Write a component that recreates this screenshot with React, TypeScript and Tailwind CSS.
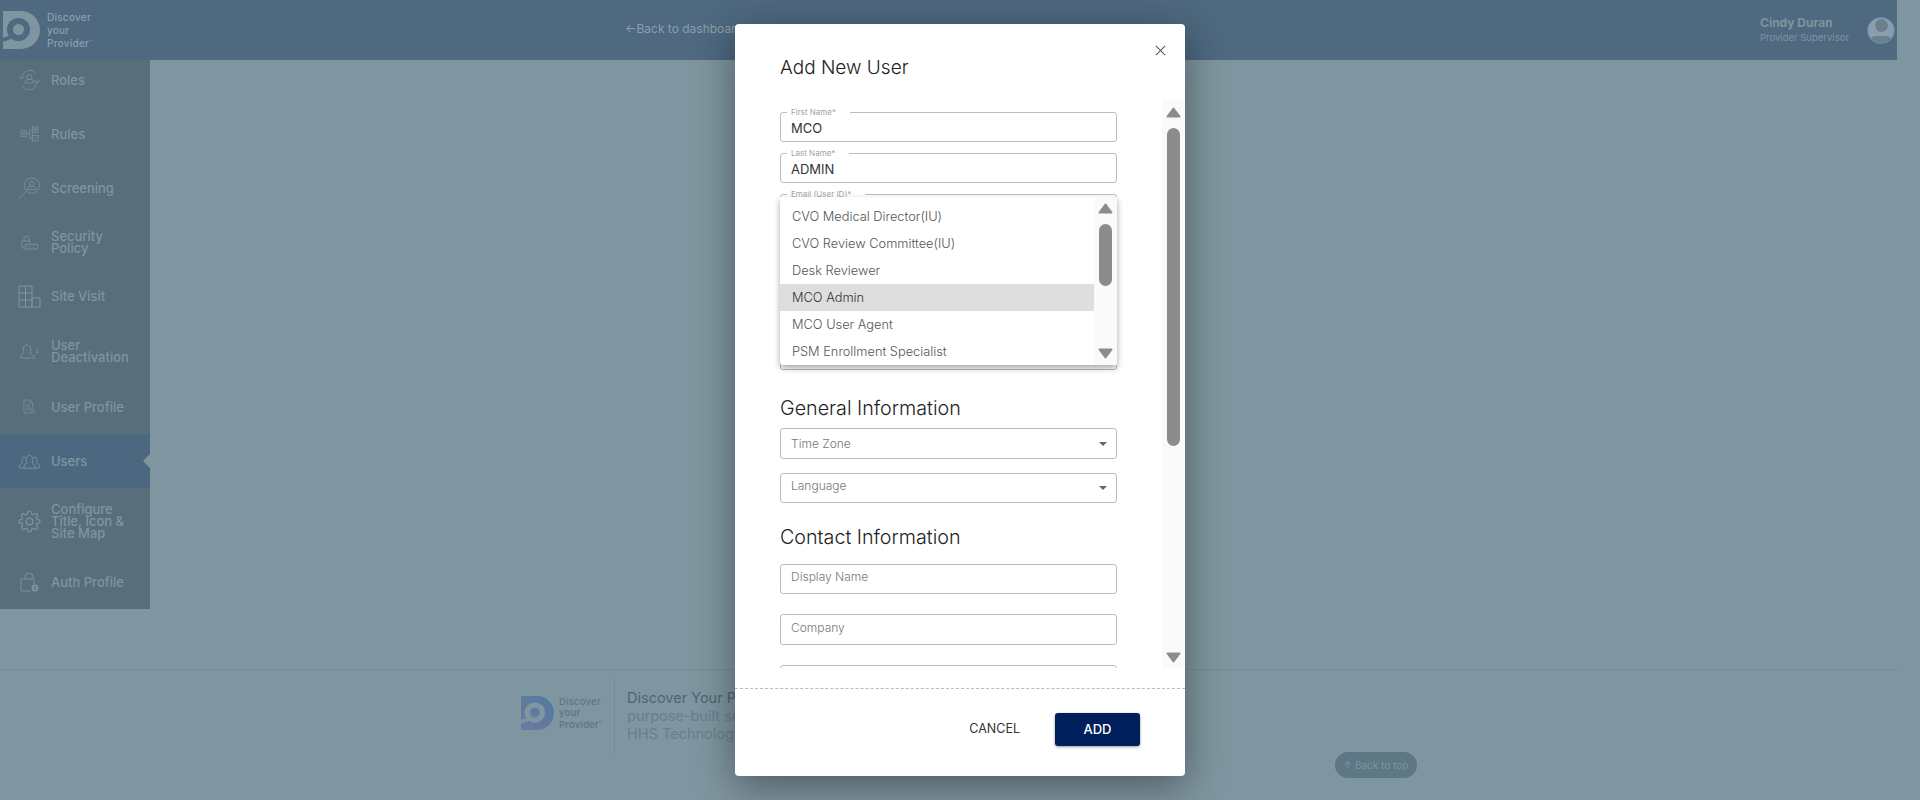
import React from 'react';

const sans = "font-['Inter','Liberation_Sans',sans-serif]";

const LogoMark = ({ light, dark, className }: { light: string; dark: string; className: string }) => (
  <svg viewBox="0 0 37 38" className={className}>
    <defs>
      <linearGradient id="logoGradient" x1="1" y1="0" x2="0" y2="1">
        <stop offset="0" stopColor="#4f7ba0" />
        <stop offset="1" stopColor="#6f7a9e" />
      </linearGradient>
    </defs>
    <path d="M0 0h18a19 19 0 0 1 0 38H0z" fill={light} />
    <circle cx="15.5" cy="18.5" r="11.5" fill={dark} />
    <circle cx="15.5" cy="18.5" r="5.5" fill={light} />
    <path d="M8 26L0 29" stroke={dark} strokeWidth="4" />
  </svg>
);

const icons: Record<string, React.ReactNode> = {
  roles: (
    <svg viewBox="0 0 24 20" className="h-[20px] w-[23px] shrink-0" fill="none" stroke="currentColor" strokeWidth="0.8">
      <path d="M4 8a8.500 8.500 0 0 1 15-5M20 11a8.500 8.500 0 0 1-15 6" />
      <path d="M1 7l3 2 3-3M17 10l3 3 3-3" />
      <circle cx="12" cy="7" r="2.600" />
      <path d="M7.500 13c0-3 2-3.500 3-3.500h3c1 0 3 .5 3 3.500z" />
    </svg>
  ),
  rules: (
    <svg viewBox="0 0 20 17" className="h-[16px] w-[19px] shrink-0" fill="none" stroke="currentColor" strokeWidth="0.8">
      <rect x="1" y="5" width="6" height="6" />
      <rect x="3" y="7" width="2" height="2" />
      <rect x="13" y="1" width="6" height="6" />
      <rect x="15" y="3" width="2" height="2" />
      <rect x="13" y="10" width="6" height="6" />
      <path d="M15 13l1 1 2-2M7 8h3M10 4h3v9h-3z" />
    </svg>
  ),
  screening: (
    <svg viewBox="0 0 24 24" className="h-[23px] w-[23px] shrink-0" fill="none" stroke="currentColor" strokeWidth="0.8">
      <circle cx="14.500" cy="9" r="8" />
      <circle cx="14.500" cy="7" r="2.500" />
      <path d="M10 13c0-3 2-3.300 3-3.300h3c1 0 3 .3 3 3.300zM8.500 15L1 23" />
    </svg>
  ),
  security: (
    <svg viewBox="0 0 17 15" className="h-[15px] w-[17px] shrink-0" fill="none" stroke="currentColor" strokeWidth="0.8">
      <path d="M3 6V3.500a2.500 2.500 0 0 1 5 0V6M4 13H1V6h8v3" />
      <rect x="4.500" y="9.500" width="12" height="4.500" />
      <path d="M6.500 11.800h8" strokeDasharray="1 1" />
    </svg>
  ),
  site: (
    <svg viewBox="0 0 23 23" className="h-[23px] w-[23px] shrink-0" fill="none" stroke="currentColor" strokeWidth="1">
      <path d="M1 1h13v21H1zM14 13h8v9h-8zM1 8h13M1 15h13M7.500 1v21" />
    </svg>
  ),
  deactivation: (
    <svg viewBox="0 0 19 15" className="h-[15px] w-[19px] shrink-0" fill="none" stroke="currentColor" strokeWidth="0.9">
      <path d="M3.500 14H.7c0-3.500 2-5 3.300-5.500C2.500 6.500 3 1 7 1s4.500 5.500 3 7.500c1 .5 1.500 1.200 2 2.300M3.500 14H11" />
      <path d="M12 12h3l-3 3h3M16 6h2.500l-2.500 2.500h2.500" strokeWidth="0.6" />
    </svg>
  ),
  profile: (
    <svg viewBox="0 0 13 16" className="h-[16px] w-[13px] shrink-0" fill="none" stroke="currentColor" strokeWidth="0.7">
      <path d="M8 14H1V1h6l2.500 2.500V8M7 1v3h2.500M3 6h4M3 8h4M3 10h3" />
      <circle cx="9" cy="11" r="2" />
      <path d="M10.500 12.500L12.500 15" />
    </svg>
  ),
  users: (
    <svg viewBox="0 0 23 15" className="h-[15px] w-[23px] shrink-0" fill="none" stroke="currentColor" strokeWidth="0.9">
      <path d="M6 14H2l-1-.5c0-2 1.500-3.500 3.500-4.500C3.500 7.500 3.500 3 6 3c.8 0 1.500.4 2 1M17 14h4l1-.5c0-2-1.500-3.500-3.500-4.500 1-1.500 1-6-1.500-6-.8 0-1.500.4-2 1" />
      <path d="M6 14.300h11c.5-2-1-4.500-3-5.500 1.500-2 1-7.300-2.500-7.300S7.500 6.800 9 8.800c-2 1-3.500 3.500-3 5.500z" />
    </svg>
  ),
  gear: (
    <svg viewBox="0 0 24 24" className="h-[23px] w-[23px] shrink-0" fill="none" stroke="currentColor" strokeWidth="1.200">
      <circle cx="12" cy="12" r="3.500" />
      <path d="M19.400 15a1.650 1.650 0 0 0 .33 1.820l.06.06a2 2 0 1 1-2.830 2.830l-.06-.06a1.650 1.650 0 0 0-2.820 1.170V21a2 2 0 1 1-4 0v-.09A1.650 1.650 0 0 0 7.270 19.700l-.06.06a2 2 0 1 1-2.830-2.830l.06-.06A1.650 1.650 0 0 0 3.270 14H3a2 2 0 1 1 0-4h.09A1.650 1.650 0 0 0 4.300 7.270l-.06-.06a2 2 0 1 1 2.830-2.830l.06.06A1.650 1.650 0 0 0 10 3.270V3a2 2 0 1 1 4 0v.09a1.650 1.650 0 0 0 2.820 1.170l.06-.06a2 2 0 1 1 2.830 2.830l-.06.06A1.650 1.650 0 0 0 20.900 10H21a2 2 0 1 1 0 4h-.09a1.650 1.650 0 0 0-1.510 1z" />
    </svg>
  ),
  auth: (
    <svg viewBox="0 0 19 20" className="h-[20px] w-[19px] shrink-0" fill="none" stroke="currentColor" strokeWidth="0.9">
      <path d="M5 7V5a3.800 3.800 0 0 1 8 0v2M11 19H1V7h13v6" />
      <circle cx="15" cy="16" r="3.500" fill="currentColor" stroke="none" />
      <circle cx="15" cy="15" r="1" fill="#586e7b" stroke="none" />
      <path d="M13.200 18c0-1.500 3.600-1.500 3.600 0" stroke="#586e7b" />
    </svg>
  ),
};

const navItems = [
  { label: 'Roles', icon: 'roles', height: 'h-[54px]' },
  { label: 'Rules', icon: 'rules', height: 'h-[54px]' },
  { label: 'Screening', icon: 'screening', height: 'h-[54px]' },
  { label: 'Security\nPolicy', icon: 'security', height: 'h-[54px]' },
  { label: 'Site Visit', icon: 'site', height: 'h-[54px]' },
  { label: 'User\nDeactivation', icon: 'deactivation', height: 'h-[57px]' },
  { label: 'User Profile', icon: 'profile', height: 'h-[54px]' },
  { label: 'Users', icon: 'users', height: 'h-[54px]', active: true },
  { label: 'Configure\nTitle, Icon &\nSite Map', icon: 'gear', height: 'h-[67px]' },
  { label: 'Auth Profile', icon: 'auth', height: 'h-[54px]' },
];

const roles = ['CVO Medical Director(IU)', 'CVO Review Committee(IU)', 'Desk Reviewer', 'MCO Admin', 'MCO User Agent', 'PSM Enrollment Specialist'];

const Triangle = ({ down, className }: { down?: boolean; className: string }) => (
  <svg viewBox="0 0 15 11" className={className}>
    <path
      d={down ? 'M1.500 1.500L13.500 1.500L7.500 9.500z' : 'M1.500 9.500L13.500 9.500L7.500 1.500z'}
      fill="#8c8c8c"
      stroke="#8c8c8c"
      strokeWidth="2"
      strokeLinejoin="round"
    />
  </svg>
);

const Field = ({ label, value, className }: { label: string; value: string; className?: string }) => (
  <div className={`relative h-[30px] rounded-[3px] border border-[#bdbdbd] px-[10px] ${className ?? ''}`}>
    <span className="absolute -top-[5px] left-[6px] bg-white pl-[4px] pr-[14px] text-[8px] leading-[9px] text-[#a3a3a3]">{label}</span>
    <div className="pt-[7px] text-[13px] leading-[16px] text-[#333]">{value}</div>
  </div>
);

const Placeholder = ({ label, caret, className }: { label: string; caret?: boolean; className: string }) => (
  <div className={`flex items-center justify-between rounded-[3px] border border-[#bdbdbd] pl-[10px] pr-[9px] text-[12px] font-light text-[#777] ${className}`}>
    <span>{label}</span>
    {caret && <span className="h-0 w-0 border-x-[4px] border-t-[4px] border-x-transparent border-t-[#666]" />}
  </div>
);

export default function App() {
  return (
    <div className={`relative h-[800px] w-[1920px] overflow-hidden bg-[#7f959f] ${sans}`}>
      <div className="w-[1897px]">
        <header className="relative z-10 flex h-[60px] items-center bg-[#4e6980]">
          <div className="flex w-[625px] items-center pl-[3px]">
            <LogoMark light="#7f959f" dark="#4e6980" className="h-[38px] w-[37px]" />
            <div className="ml-[7px] text-[10px] font-medium leading-[13px] tracking-wide text-[#8aa0ad]">
              Discover<br />your<br />Provider<sup className="text-[5px]">™</sup>
            </div>
          </div>
          <span className="pb-[2px] text-[12px] text-[#8aa0ad]">←Back to dashboard</span>
          <div className="ml-auto flex items-center">
            <div className="w-[107px] text-[#7f959f]">
              <div className="text-[12px] font-bold leading-[16px]">Cindy Duran</div>
              <div className="text-[9.5px] leading-[14px]">Provider Supervisor</div>
            </div>
            <div className="mr-[2px] h-[27px] w-[28px] overflow-hidden rounded-full border border-[#5e88a8] bg-[#8a9fab]">
              <div className="mx-auto mt-[1px] h-[13px] w-[13px] rounded-full bg-[#6b808d]" />
              <div className="mx-auto mt-[4px] h-[14px] w-[24px] rounded-full bg-[#6b808d]" />
            </div>
          </div>
        </header>

        <aside className="h-[549px] w-[150px] overflow-hidden bg-[#586e7b]">
          <ul className="-mt-[7px]">
            {navItems.map((item) => (
              <li key={item.icon} className={`relative flex items-center text-[#7f959f] ${item.height} ${item.active ? 'bg-[#4c6880]' : ''}`}>
                <span className="flex w-[51px] shrink-0 justify-center pl-[12px] pr-[5px]">{icons[item.icon]}</span>
                <span className="whitespace-pre-line pb-px text-[13px] font-medium leading-[12px]">{item.label}</span>
                {item.active && (
                  <span className="absolute right-0 top-1/2 h-0 w-0 -translate-y-1/2 border-y-[7px] border-r-[7px] border-y-transparent border-r-[#7f959f]" />
                )}
              </li>
            ))}
          </ul>
        </aside>

        <footer className="mt-[60px] flex h-[131px] border-t border-[#748b96] pl-[521px] pt-[8px]">
          <div className="flex h-[75px] w-[94px] items-center border-r border-[#748b96] pb-[5px]">
            <LogoMark light="url(#logoGradient)" dark="#7f959f" className="h-[34px] w-[33px]" />
            <div className="ml-[5px] text-[9.5px] font-medium leading-[11.5px] tracking-wide text-[#5d7685]">
              Discover<br />your<br />Provider<sup className="text-[5px]">™</sup>
            </div>
          </div>
          <div className="pl-[12px] pt-[11px] text-[14.5px] leading-[18px] text-[#658090]">
            <div className="text-[#4f6575]">Discover Your Provider</div>
            <div>purpose-built solution</div>
            <div>HHS Technology Group</div>
          </div>
        </footer>
      </div>

      <a className="absolute left-[1335px] top-[752px] flex h-[26px] w-[82px] items-center justify-center gap-[3px] rounded-full bg-[#5d7785] text-[10px] text-[#7f959f]">
        <span>↑</span>Back to top
      </a>

      <div className="absolute left-[735px] top-[24px] z-20 flex h-[752px] w-[450px] flex-col rounded-[4px] bg-white shadow-[0_10px_40px_rgba(0,0,0,0.4)]">
        <div className="relative h-[76px] pl-[45px] pt-[32px]">
          <h2 className="text-[19px] font-light leading-[24px] text-[#222]">Add New User</h2>
          <svg viewBox="0 0 12 12" className="absolute right-[19px] top-[21px] h-[11px] w-[11px]" stroke="#555" strokeWidth="1.100">
            <path d="M1 1l10 10M11 1L1 11" />
          </svg>
        </div>

        <div className="flex h-[568px] overflow-hidden">
          <div className="relative w-[427px] shrink-0 pl-[45px] pr-[45px] pt-[12px]">
            <Field label="First Name*" value="MCO" />
            <Field label="Last Name*" value="ADMIN" className="mt-[11px]" />
            <Field label="Email (User ID)*" value="" className="mt-[11px]" />
            <Field label="Role*" value="" className="mt-[116px]" />
            <h3 className="mt-[26px] text-[19.7px] font-light leading-[24px] text-[#222]">General Information</h3>
            <Placeholder label="Time Zone" caret className="mt-[8px] h-[31px]" />
            <Placeholder label="Language" caret className="mt-[14px] h-[30px] [&>span:first-child]:pb-[4px]" />
            <h3 className="mt-[22px] text-[19.7px] font-light leading-[24px] text-[#222]">Contact Information</h3>
            <Placeholder label="Display Name" className="mt-[15px] h-[30px] pb-[4px]" />
            <Placeholder label="Company" className="mt-[20px] h-[31px] pb-[3px]" />
            <Placeholder label="" className="mt-[20px] h-[30px]" />

            <div className="absolute left-[45px] top-[97px] flex h-[168px] w-[337px] rounded-b-[3px] bg-white shadow-[0_3px_6px_rgba(0,0,0,0.35)]">
              <ul className="w-[314px] pt-[6px] text-[12.8px] font-light text-[#555]">
                {roles.map((role) => (
                  <li key={role} className={`flex h-[27px] items-center pl-[12px] ${role === 'MCO Admin' ? 'bg-[#dedede] text-[#333]' : ''}`}>
                    {role}
                  </li>
                ))}
              </ul>
              <div className="flex w-[23px] flex-col items-center bg-[#fafafa] pt-[6px]">
                <Triangle className="h-[11px] w-[15px]" />
                <div className="mt-[10px] h-[62px] w-[13px] rounded-full bg-[#8c8c8c]" />
                <Triangle down className="mt-[62px] h-[11px] w-[15px]" />
              </div>
            </div>
          </div>

          <div className="flex w-[23px] flex-col items-center bg-[#fafafa] pt-[7px]">
            <Triangle className="h-[11px] w-[15px]" />
            <div className="mt-[10px] h-[318px] w-[13px] rounded-full bg-[#8c8c8c]" />
            <Triangle down className="mt-[206px] h-[11px] w-[15px]" />
          </div>
        </div>

        <div className="mt-[20px] flex items-start justify-end border-t border-dashed border-[#bbb] pr-[45px] pt-[24px]">
          <span className="mr-[35px] flex h-[33px] items-center text-[12.5px] text-[#333]">CANCEL</span>
          <button className="h-[33px] w-[85px] rounded-[3px] bg-[#00205b] text-[13px] font-medium text-white shadow-[0_1px_3px_rgba(0,0,0,0.4)]">ADD</button>
        </div>
      </div>
    </div>
  );
}
